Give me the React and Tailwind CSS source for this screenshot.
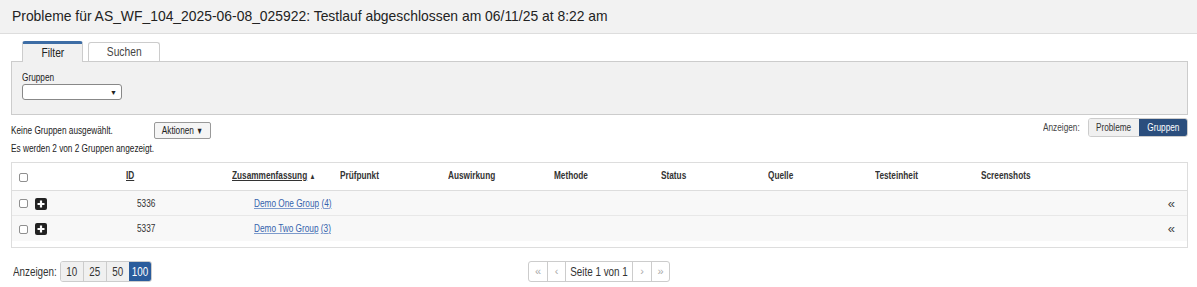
const cols = [
  { label: "Prüfpunkt", w: "w-[108px]" },
  { label: "Auswirkung", w: "w-[106px]" },
  { label: "Methode", w: "w-[107px]" },
  { label: "Status", w: "w-[107px]" },
  { label: "Quelle", w: "w-[107px]" },
  { label: "Testeinheit", w: "w-[106px]" },
  { label: "Screenshots", w: "w-[108px]" },
];

const rows = [
  { id: 5336, name: "Demo One Group", count: 4 },
  { id: 5337, name: "Demo Two Group", count: 3 },
];

// the app renders its small text in a condensed face; squeeze Arial to match
const squeeze = {
  left: "inline-block origin-left scale-x-[0.75] whitespace-nowrap",
  center: "inline-block origin-center scale-x-[0.75] whitespace-nowrap",
  wide: "inline-block origin-center scale-x-[0.82] whitespace-nowrap",
  wideLeft: "inline-block origin-left scale-x-[0.82] whitespace-nowrap",
};

function T({ children, v = "left" }) {
  return <span className={squeeze[v]}>{children}</span>;
}

function Box() {
  return <span className="inline-block h-[9px] w-[9px] rounded-[2px] border border-[#8f8f8f] bg-white" />;
}

function PlusIcon() {
  return (
    <span className="inline-flex h-[12px] w-[12px] items-center justify-center rounded-[2px] bg-[#222]">
      <svg width="8" height="8" viewBox="0 0 8 8">
        <path d="M4 0.5v7M0.5 4h7" stroke="#fff" strokeWidth="2.2" />
      </svg>
    </span>
  );
}

export default function App() {
  return (
    <div className="h-[287px] w-[1197px] bg-white font-['Liberation_Sans',Arial,sans-serif] text-[#333]">
      {/* Title */}
      <div className="flex h-[34px] items-center border-b border-[#ddd] bg-[#f2f2f2] pl-[12px] text-[13.9px] text-[#222]">
        Probleme für AS_WF_104_2025-06-08_025922: Testlauf abgeschlossen am 06/11/25 at 8:22 am
      </div>

      {/* Tabs */}
      <div className="mx-[11px] mt-[7px] w-[1177px]">
        <div className="flex items-end gap-[5px] pl-[11px]">
          <div className="relative z-10 -mb-px flex h-[21px] w-[61px] items-center justify-center rounded-t-[3px] border border-b-0 border-[#ccc] border-t-[3px] border-t-[#3d6da5] bg-[#f1f1f1] text-[12.5px] text-[#222]">
            <T v="wide">Filter</T>
          </div>
          <div className="flex h-[19px] w-[72px] items-center justify-center rounded-t-[3px] border border-b-0 border-[#ccc] bg-white text-[12.5px] text-[#444]">
            <T v="wide">Suchen</T>
          </div>
        </div>
        <div className="h-[54px] border border-[#ccc] bg-[#f1f1f1] px-[10px] pt-[9px]">
          <div className="text-[11px] leading-[12px] text-[#222]">
            <T>Gruppen</T>
          </div>
          <div className="mt-[1px] flex h-[16px] w-[100px] items-center justify-end rounded-[3px] border border-[#888] bg-white pr-[4px]">
            <span className="text-[7px] leading-none text-[#222]">▼</span>
          </div>
        </div>
      </div>

      {/* Actions */}
      <div className="mx-[11px] mt-[7px] flex w-[1177px] items-start justify-between">
        <div>
          <div className="flex items-center">
            <span className="w-[143px] text-[11px] text-[#222]">
              <T>Keine Gruppen ausgewählt.</T>
            </span>
            <span className="flex h-[17px] w-[57px] items-center justify-center rounded-[2px] border border-[#999] bg-[#f5f5f5] text-[11px] text-[#222]">
              <T v="center">
                Aktionen <span className="text-[9px]">▼</span>
              </T>
            </span>
          </div>
          <div className="mt-[3px] text-[11px] leading-[12px] text-[#222]">
            <T>Es werden 2 von 2 Gruppen angezeigt.</T>
          </div>
        </div>
        <div className="mt-[-4px] flex items-center">
          <span className="mr-[9px] w-[36px] text-[11px] text-[#444]">
            <T>Anzeigen:</T>
          </span>
          <div className="flex h-[19px] overflow-hidden rounded-[3px] border border-[#ccc] text-[11px]">
            <span className="flex w-[50px] items-center justify-center bg-[#f0f0f0] text-[#333]">
              <T v="center">Probleme</T>
            </span>
            <span className="flex w-[48px] items-center justify-center bg-[#2b4e7d] text-white">
              <T v="center">Gruppen</T>
            </span>
          </div>
        </div>
      </div>

      {/* Table */}
      <div className="mx-[11px] mt-[8px] w-[1177px] border border-[#ddd] pb-[6px] text-[11px]">
        <div className="flex h-[28px] items-center border-b border-[#ddd] pb-[2px] font-bold text-[#333]">
          <div className="w-[104px] pl-[7px] pt-[5px]">
            <Box />
          </div>
          <div className="w-[106px] pl-[10px]">
            <T>
              <span className="underline">ID</span>
            </T>
          </div>
          <div className="w-[108px] pl-[10px]">
            <T>
              <span className="underline">Zusammenfassung</span> <span className="text-[8px]">▲</span>
            </T>
          </div>
          {cols.map((c) => (
            <div key={c.label} className={`${c.w} pl-[10px]`}>
              <T>{c.label}</T>
            </div>
          ))}
        </div>
        {rows.map((r) => (
          <div key={r.id} className="flex h-[25px] items-center border-b border-[#e8e8e8] bg-[#f8f8f8] last:border-b-0">
            <div className="flex w-[104px] items-center gap-[7px] pl-[7px] pt-[1px]">
              <Box />
              <PlusIcon />
            </div>
            <div className="w-[106px] pl-[21px] text-[#333]">
              <T>{r.id}</T>
            </div>
            <div className="w-[108px] pl-[32px]">
              <T>
                <span className="text-[#3563ad] underline decoration-[#7d9bcc]">{r.name}</span>{" "}
                <span className="text-[#3563ad] underline decoration-[#7d9bcc]">({r.count})</span>
              </T>
            </div>
            <div className="flex-1" />
            <div className="pr-[12px] text-[13px] leading-none text-[#444]">«</div>
          </div>
        ))}
      </div>

      {/* Footer */}
      <div className="mt-[13px] flex h-[21px] items-center pl-[13px] text-[12px]">
        <span className="mr-[6px] w-[41px] text-[#333]">
          <T v="wideLeft">Anzeigen:</T>
        </span>
        <div className="flex h-[21px] overflow-hidden rounded-[3px] border border-[#ccc]">
          <span className="flex w-[23px] items-center justify-center border-r border-[#ccc] bg-[#f0f0f0]">
            <T v="wide">10</T>
          </span>
          <span className="flex w-[23px] items-center justify-center border-r border-[#ccc] bg-[#f0f0f0]">
            <T v="wide">25</T>
          </span>
          <span className="flex w-[22px] items-center justify-center bg-[#f0f0f0]">
            <T v="wide">50</T>
          </span>
          <span className="flex w-[22px] items-center justify-center bg-[#2a5c9c] text-white">
            <T v="wide">100</T>
          </span>
        </div>
        <div className="ml-[376px] flex h-[21px] overflow-hidden rounded-[3px] border border-[#ccc] bg-white text-[11px] text-[#aaa]">
          <span className="flex w-[19px] items-center justify-center border-r border-[#ccc]">«</span>
          <span className="flex w-[18px] items-center justify-center border-r border-[#ccc]">‹</span>
          <span className="flex w-[67px] items-center justify-center border-r border-[#ccc] text-[12px] text-[#333]">
            <T v="wide">Seite 1 von 1</T>
          </span>
          <span className="flex w-[19px] items-center justify-center border-r border-[#ccc]">›</span>
          <span className="flex w-[17px] items-center justify-center">»</span>
        </div>
      </div>
    </div>
  );
}
